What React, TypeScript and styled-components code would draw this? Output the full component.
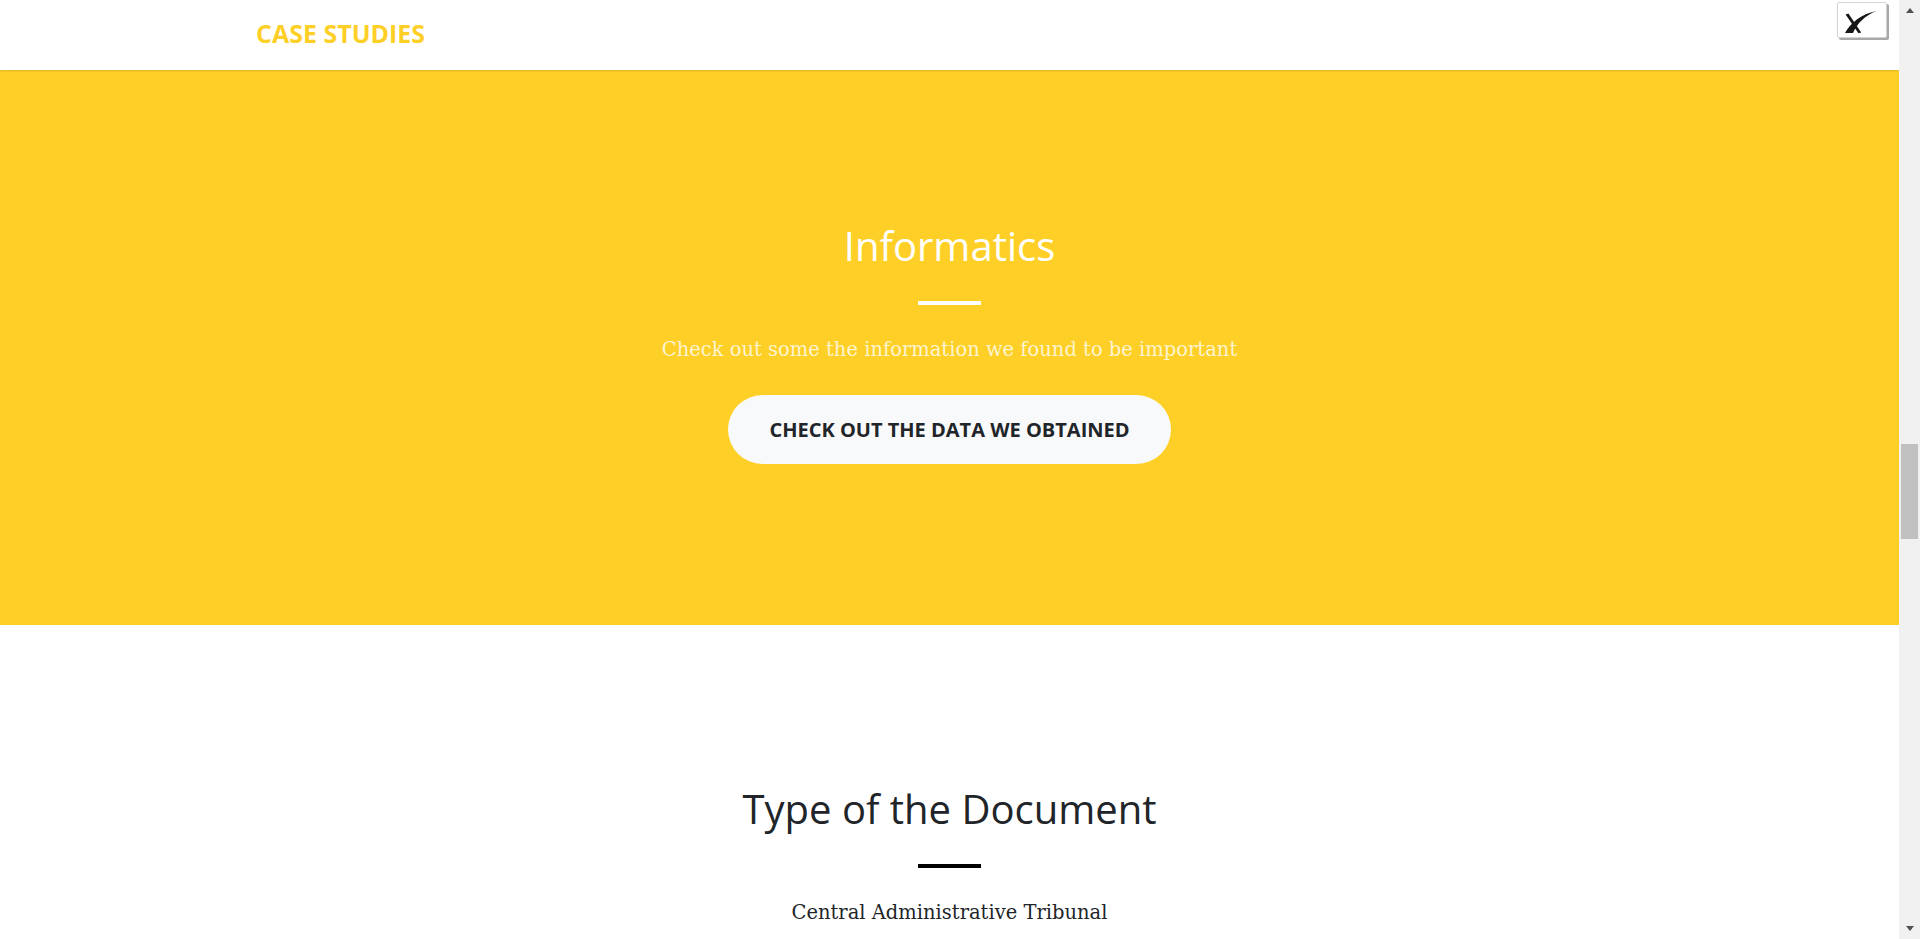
import styled, { createGlobalStyle } from "styled-components";

const GlobalStyle = createGlobalStyle`
  body {
    margin: 0;
    overflow: hidden;
    font-family: "Open Sans", "Noto Sans", sans-serif;
    color: #212529;
    background-color: #ffffff;
  }
`;

const yellow = "#fed027";

const Shell = styled.div`
  display: flex;
  height: 100vh;
`;

const Page = styled.main`
  flex: 1;
  min-width: 0;
  height: 100%;
  overflow: hidden;
`;

const Navbar = styled.nav`
  position: relative;
  z-index: 2;
  height: 70px;
  background-color: #ffffff;
  box-shadow: 0 1px 2px rgba(0, 0, 0, 0.12);
`;

const NavContainer = styled.div`
  max-width: 1425px;
  height: 100%;
  margin: 0 auto;
  padding: 0 19px 4px;
  box-sizing: border-box;
  display: flex;
  align-items: center;
`;

const Brand = styled.a`
  font-size: 25px;
  font-weight: 700;
  color: ${yellow};
  text-transform: uppercase;
  text-decoration: none;
`;

const CloseButton = styled.button`
  position: fixed;
  top: 2px;
  right: 33px;
  z-index: 20;
  width: 50px;
  height: 36px;
  padding: 0;
  box-sizing: border-box;
  background-color: #ffffff;
  border: 1px solid #d4d4d4;
  border-radius: 2px;
  box-shadow: 2px 2px 0 #a8a8a8;
  display: flex;
  align-items: center;
  justify-content: center;
  cursor: pointer;

  svg {
    flex-shrink: 0;
  }
`;

const Section = styled.section<{ $tone?: "primary" | "plain" }>`
  padding: ${(p) => (p.$tone === "primary" ? "152px 19px 161px" : "160px 19px")};
  text-align: center;
  background-color: ${(p) => (p.$tone === "primary" ? yellow : "#ffffff")};
  color: ${(p) => (p.$tone === "primary" ? "#ffffff" : "#212529")};
`;

const Heading = styled.h2`
  margin: 0;
  font-size: 40px;
  font-weight: 400;
  line-height: 48px;
`;

const Divider = styled.hr<{ $light?: boolean }>`
  width: 63px;
  height: 4px;
  margin: 31px auto 30px;
  border: 0;
  background-color: ${(p) => (p.$light ? "#ffffff" : "#000000")};
`;

const Lead = styled.p<{ $light?: boolean }>`
  margin: 0;
  font-family: "DejaVu Serif", "Liberation Serif", serif;
  font-size: 19.5px;
  line-height: 30px;
  color: ${(p) => (p.$light ? "rgba(255, 255, 255, 0.78)" : "#212529")};
`;

const DataButton = styled.a`
  display: inline-block;
  margin-top: 30px;
  padding: 0 41px;
  height: 69px;
  line-height: 69px;
  border-radius: 10rem;
  background-color: #f8f9fa;
  color: #212529;
  font-size: 20px;
  font-weight: 700;
  text-transform: uppercase;
  text-decoration: none;
`;

/* the browser scrollbar seen at the right edge of the screenshot */
const ScrollBar = styled.div`
  width: 21px;
  flex-shrink: 0;
  display: flex;
  flex-direction: column;
  background-color: #f1f1f1;
`;

const ScrollArrow = styled.div<{ $dir: "up" | "down" }>`
  height: 21px;
  display: flex;
  align-items: center;
  justify-content: center;

  &::before {
    content: "";
    width: 0;
    height: 0;
    border-left: 4.5px solid transparent;
    border-right: 4.5px solid transparent;
    ${(p) =>
      p.$dir === "up"
        ? "border-bottom: 5px solid #505050;"
        : "border-top: 5px solid #505050;"}
  }
`;

const ScrollTrack = styled.div`
  flex: 1;
`;

const ScrollThumb = styled.div`
  margin: 423px 2px 0;
  height: 95px;
  background-color: #c1c1c1;
`;

interface Fact {
  title: string;
  value: string;
}

const fact: Fact = {
  title: "Type of the Document",
  value: "Central Administrative Tribunal",
};

function CloseIcon() {
  return (
    <svg width="48" height="34" viewBox="1 1 48 34">
      {/* thin stroke, upper left to lower right */}
      <path d="M8.6 12.4 L11.4 11.6 L24.2 30.6 L21.4 31.2 Z" fill="#161616" />
      {/* thick swoosh, lower left sweeping to upper right */}
      <path d="M8 31 C 13 21.5, 24 12, 39.5 9 C 28 13.5, 20.5 21, 16 31 Z" fill="#161616" />
    </svg>
  );
}

function FactSection({ fact }: { fact: Fact }) {
  return (
    <Section $tone="plain">
      <Heading>{fact.title}</Heading>
      <Divider />
      <Lead>{fact.value}</Lead>
    </Section>
  );
}

function App() {
  return (
    <>
      <GlobalStyle />
      <Shell>
        <Page>
          <Navbar>
            <NavContainer>
              <Brand href="#top">Case Studies</Brand>
            </NavContainer>
          </Navbar>

          <Section $tone="primary">
            <Heading>Informatics</Heading>
            <Divider $light />
            <Lead $light>Check out some the information we found to be important</Lead>
            <DataButton href="#data">Check out the data we obtained</DataButton>
          </Section>

          <FactSection fact={fact} />
        </Page>

        <ScrollBar>
          <ScrollArrow $dir="up" />
          <ScrollTrack>
            <ScrollThumb />
          </ScrollTrack>
          <ScrollArrow $dir="down" />
        </ScrollBar>
      </Shell>

      <CloseButton aria-label="Close">
        <CloseIcon />
      </CloseButton>
    </>
  );
}

export default App;
